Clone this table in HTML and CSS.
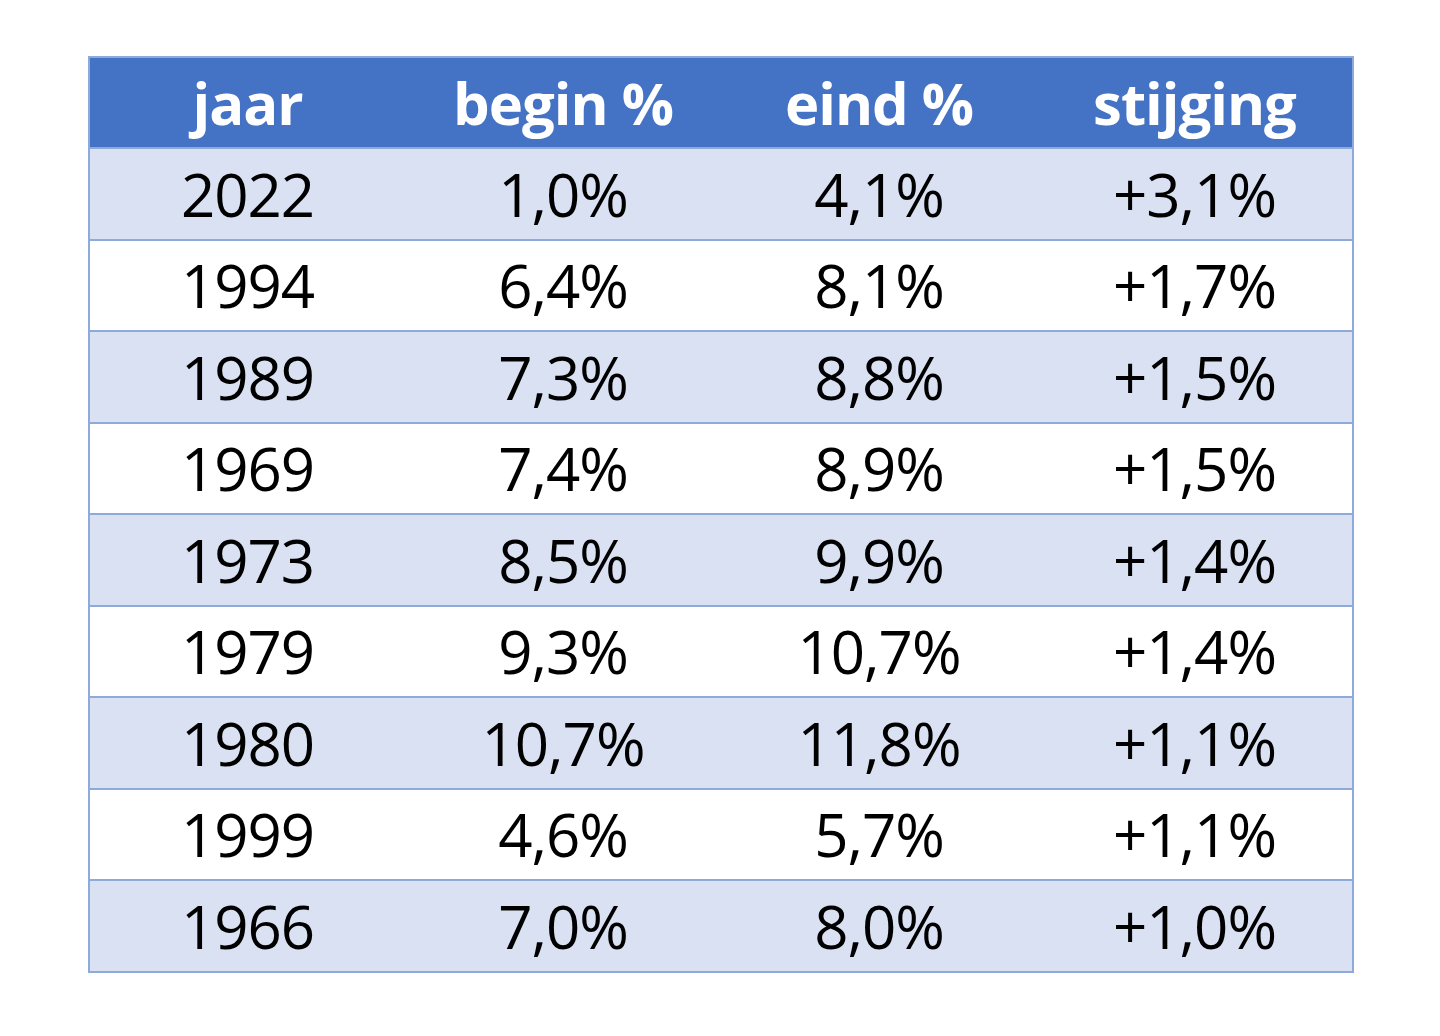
FILE: index.html
```html
<!DOCTYPE html>
<html lang="nl">
<head>
<meta charset="utf-8">
<link rel="stylesheet" href="styles.css">
</head>
<body>
<div class="wrap">
<table class="tbl">
<thead>
<tr><th>jaar</th><th>begin %</th><th>eind %</th><th>stijging</th></tr>
</thead>
<tbody>
<tr><td>2022</td><td>1,0%</td><td>4,1%</td><td>+3,1%</td></tr>
<tr><td>1994</td><td>6,4%</td><td>8,1%</td><td>+1,7%</td></tr>
<tr><td>1989</td><td>7,3%</td><td>8,8%</td><td>+1,5%</td></tr>
<tr><td>1969</td><td>7,4%</td><td>8,9%</td><td>+1,5%</td></tr>
<tr><td>1973</td><td>8,5%</td><td>9,9%</td><td>+1,4%</td></tr>
<tr><td>1979</td><td>9,3%</td><td>10,7%</td><td>+1,4%</td></tr>
<tr><td>1980</td><td>10,7%</td><td>11,8%</td><td>+1,1%</td></tr>
<tr><td>1999</td><td>4,6%</td><td>5,7%</td><td>+1,1%</td></tr>
<tr><td>1966</td><td>7,0%</td><td>8,0%</td><td>+1,0%</td></tr>
</tbody>
</table>
</div>
</body>
</html>
```
FILE: styles.css
```css
html, body {
  margin: 0;
  padding: 0;
  background: #ffffff;
}
.wrap {
  padding: 56px 0 0 88px;
}
.tbl {
  width: 1266px;
  border-collapse: collapse;
  table-layout: fixed;
  font-family: "Open Sans", "Liberation Sans", sans-serif;
  border: 2px solid #8eaadb;
}
.tbl th, .tbl td {
  text-align: center;
  padding: 0;
  line-height: 1;
}
.tbl th {
  height: 89px;
  background: #4472c4;
  color: #ffffff;
  font-weight: 700;
  font-size: 58px;
  letter-spacing: -1px;
}
.tbl td {
  height: 89.5px;
  color: #000000;
  font-size: 60px;
  font-weight: 400;
  border-top: 2px solid #8eaadb;
  letter-spacing: -1px;
}
.tbl tbody tr:nth-child(odd) td {
  background: #d9e1f2;
}
.tbl tbody tr:nth-child(even) td {
  background: #ffffff;
}
```
